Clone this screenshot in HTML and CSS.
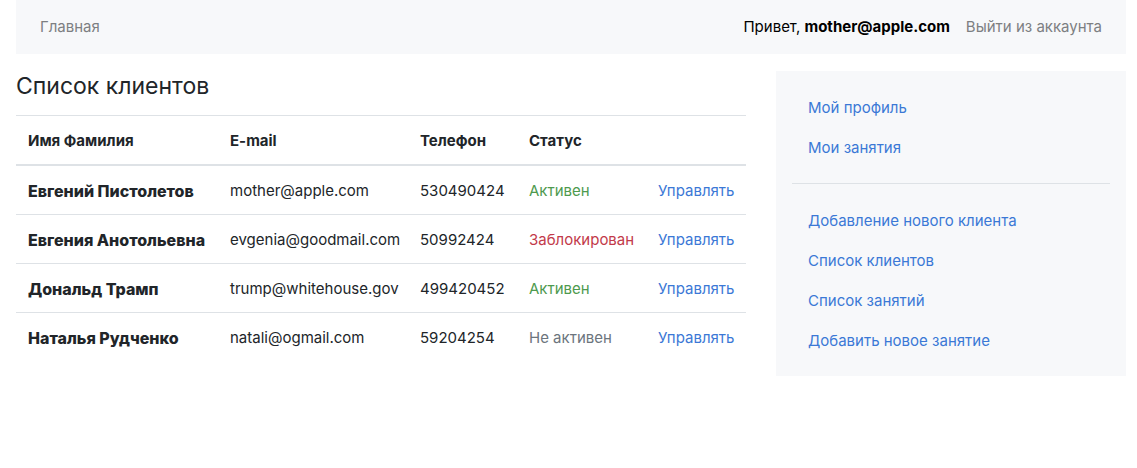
FILE: index.html
```html
<!DOCTYPE html>
<html lang="ru">
<head>
<meta charset="utf-8">
<title>Список клиентов</title>
<link rel="stylesheet" href="styles.css">
</head>
<body>
<div class="container">
  <nav class="navbar">
    <a class="nav-link muted" href="#">Главная</a>
    <div class="navbar-right">
      <span class="greeting">Привет, <b>mother@apple.com</b></span>
      <a class="nav-link muted" href="#">Выйти из аккаунта</a>
    </div>
  </nav>
  <div class="row">
    <main class="main">
      <h4 class="title">Список клиентов</h4>
      <table class="table">
        <thead>
          <tr>
            <th class="c-name">Имя Фамилия</th>
            <th class="c-mail">E-mail</th>
            <th class="c-phone">Телефон</th>
            <th class="c-status">Статус</th>
            <th class="c-act"></th>
          </tr>
        </thead>
        <tbody>
          <tr>
            <td class="name">Евгений Пистолетов</td>
            <td>mother@apple.com</td>
            <td>530490424</td>
            <td class="st-ok">Активен</td>
            <td><a href="#" class="link">Управлять</a></td>
          </tr>
          <tr>
            <td class="name">Евгения Анотольевна</td>
            <td>evgenia@goodmail.com</td>
            <td>50992424</td>
            <td class="st-block">Заблокирован</td>
            <td><a href="#" class="link">Управлять</a></td>
          </tr>
          <tr>
            <td class="name">Дональд Трамп</td>
            <td>trump@whitehouse.gov</td>
            <td>499420452</td>
            <td class="st-ok">Активен</td>
            <td><a href="#" class="link">Управлять</a></td>
          </tr>
          <tr>
            <td class="name">Наталья Рудченко</td>
            <td>natali@ogmail.com</td>
            <td>59204254</td>
            <td class="st-off">Не активен</td>
            <td><a href="#" class="link">Управлять</a></td>
          </tr>
        </tbody>
      </table>
    </main>
    <aside class="sidebar">
      <a href="#" class="side-link">Мой профиль</a>
      <a href="#" class="side-link">Мои занятия</a>
      <hr class="divider">
      <a href="#" class="side-link">Добавление нового клиента</a>
      <a href="#" class="side-link">Список клиентов</a>
      <a href="#" class="side-link">Список занятий</a>
      <a href="#" class="side-link">Добавить новое занятие</a>
    </aside>
  </div>
</div>
</body>
</html>
```

FILE: styles.css
```css
* { box-sizing: border-box; }
html, body {
  margin: 0;
  padding: 0;
  background: #fff;
}
body {
  font-family: Inter, "Noto Sans", "Liberation Sans", sans-serif;
  font-size: 15px;
  line-height: 24px;
  color: #212529;
}
a { text-decoration: none; }

.container {
  width: 1110px;
  margin-left: 16px;
}

.navbar {
  height: 54px;
  background: #f7f8fa;
  display: flex;
  align-items: center;
  justify-content: space-between;
  padding: 0 16px;
}
.navbar-right {
  display: flex;
  align-items: center;
}
.nav-link {
  padding: 8px 8px;
}
.muted { color: #7d7f82; }
.greeting {
  color: #000;
  padding: 8px 8px;
}
.greeting b { font-weight: 700; }

.row {
  display: flex;
  gap: 30px;
  margin-top: 17px;
  align-items: flex-start;
}
.main { width: 730px; }
.title {
  font-size: 23px;
  font-weight: 400;
  line-height: 29px;
  padding-top: 1px;
  margin: 0 0 14px;
  color: #212529;
}

.table {
  width: 730px;
  border-collapse: collapse;
  table-layout: fixed;
}
.table th, .table td {
  padding: 13px 12px 11px;
  text-align: left;
  vertical-align: top;
  border-top: 1px solid #dee2e6;
  white-space: nowrap;
}
.table th {
  font-weight: 700;
  border-bottom: 2px solid #dee2e6;
}
.c-name { width: 202px; }
.c-mail { width: 190px; }
.c-phone { width: 109px; }
.c-status { width: 129px; }
.c-act { width: 100px; }
.table td.name {
  font-size: 16px;
  font-weight: 800;
}

.st-ok { color: #4e9a4e; }
.st-block { color: #c23a4a; }
.st-off { color: #6c757d; }
.link { color: #3b78d6; }

.sidebar {
  width: 350px;
  background: #f7f8fa;
  padding: 16px;
  display: flex;
  flex-direction: column;
}
.side-link {
  color: #3b78d6;
  padding: 9px 16px 7px;
}
.divider {
  border: 0;
  border-top: 1px solid #dee2e6;
  margin: 16px 0;
  width: 100%;
}
```
